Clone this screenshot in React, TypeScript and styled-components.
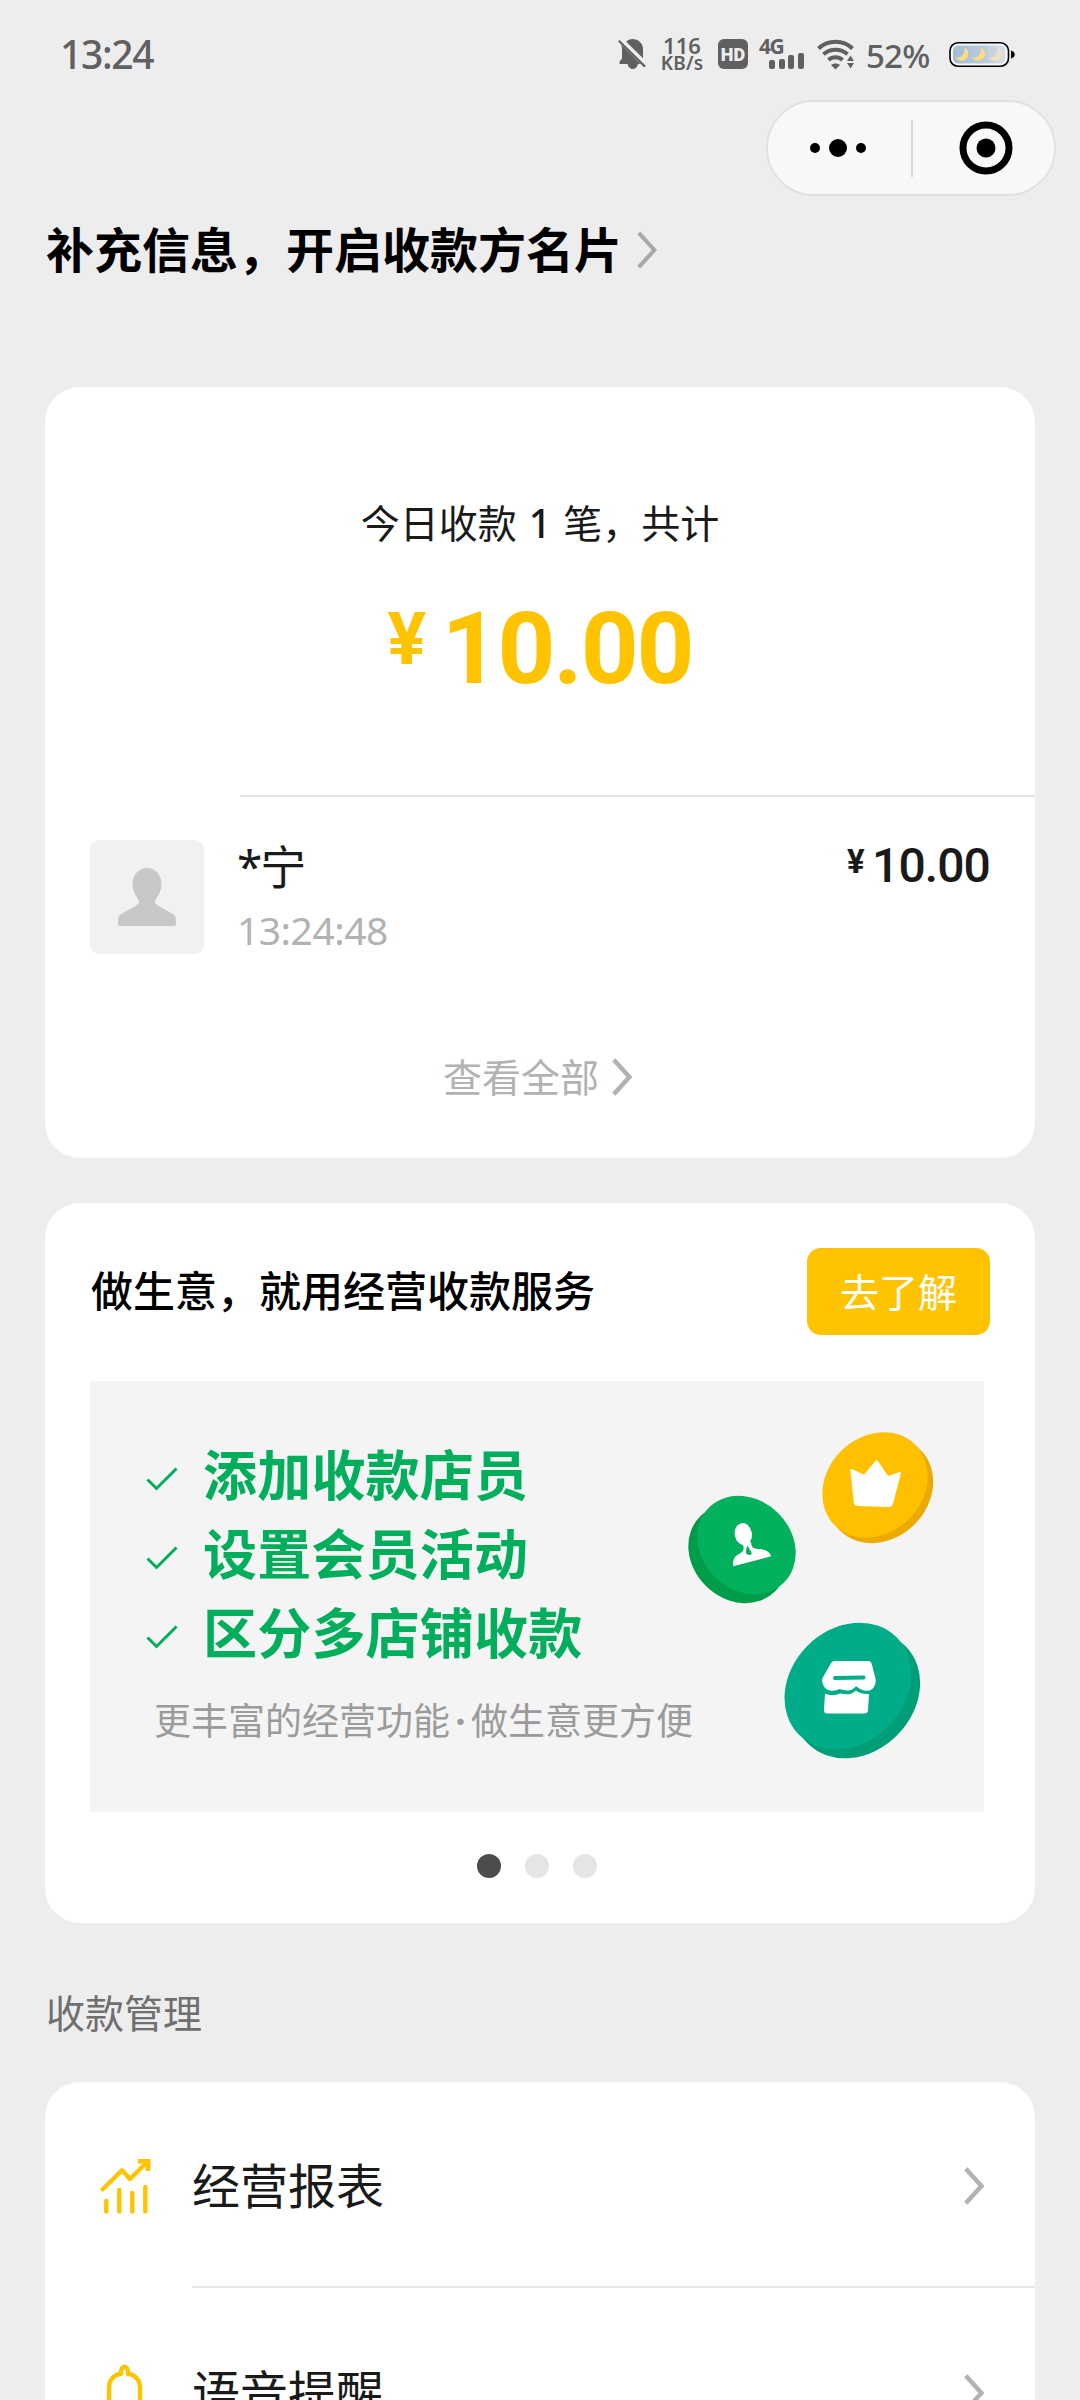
import React from "react";
import styled, { createGlobalStyle } from "styled-components";

const GlobalStyle = createGlobalStyle`
  * { box-sizing: border-box; }
  html, body { margin: 0; padding: 0; background: #ededed; }
  body {
    width: 1080px;
    height: 2400px;
    overflow: hidden;
    font-family: "Noto Sans", "Noto Sans CJK SC", sans-serif;
    color: #1a1a1a;
    white-space: nowrap;
  }
  svg { display: block; flex: none; }
`;

const Screen = styled.div`
  width: 1080px;
  height: 2400px;
  overflow: hidden;
  background: #ededed;
  display: flex;
  flex-direction: column;

  > * { flex: none; }
`;

/* ---------- status bar ---------- */

const StatusBar = styled.header`
  height: 100px;
  padding: 0 64px 0 60px;
  display: flex;
  align-items: flex-start;
  justify-content: space-between;
  color: #606060;
`;

const Clock = styled.div`
  margin-top: 29px;
  font-size: 39px;
  line-height: 50px;
  font-weight: 500;
  letter-spacing: -1.3px;
`;

const StatusIcons = styled.div`
  display: flex;
  align-items: flex-start;
  padding-top: 36px;
`;

const NetSpeed = styled.div`
  width: 44px;
  margin-left: 14px;
  display: flex;
  flex-direction: column;
  align-items: center;
  font-weight: 600;
`;

const SpeedValue = styled.span`
  font-size: 22px;
  line-height: 18px;
`;

const SpeedUnit = styled.span`
  font-size: 19px;
  line-height: 18px;
  letter-spacing: 0.2px;
`;

const HdBadge = styled.div`
  width: 30px;
  height: 30px;
  margin: 3px 0 0 14px;
  border-radius: 6px;
  background: #606060;
  color: #ededed;
  font-family: Roboto, sans-serif;
  font-size: 18px;
  line-height: 31px;
  font-weight: 900;
  text-align: center;
`;

const Cellular = styled.div`
  width: 46px;
  height: 34px;
  margin-left: 11px;
  display: grid;
  grid-template: 34px / 46px;
`;

const CellType = styled.span`
  grid-area: 1 / 1;
  font-size: 21px;
  line-height: 21px;
  font-weight: 700;
  letter-spacing: -1.4px;
`;

const CellBars = styled.div`
  grid-area: 1 / 1;
  display: flex;
  align-items: flex-end;
  justify-content: flex-end;
  gap: 3.6px;
  padding: 0 1px 1px 0;
`;

const CellBar = styled.i<{ $h: number }>`
  width: 6px;
  height: ${(p) => p.$h}px;
  border-radius: 2px;
  background: #606060;
`;

const Percent = styled.div`
  margin: 1px 0 0 12px;
  width: 68px;
  font-size: 33px;
  line-height: 38px;
  font-weight: 500;
  letter-spacing: -0.8px;
`;

/* ---------- capsule ---------- */

const CapsuleRow = styled.div`
  height: 96px;
  padding-right: 24px;
  display: flex;
  justify-content: flex-end;
`;

const Capsule = styled.div`
  width: 290px;
  height: 96px;
  border: 2px solid #e1e1e1;
  border-radius: 48px;
  background: #f8f8f8;
  display: flex;
  align-items: center;
`;

const CapsuleHalf = styled.button<{ $pad: string; $w: number }>`
  flex: none;
  width: ${(p) => p.$w}px;
  border: 0;
  padding: ${(p) => p.$pad};
  background: none;
  display: flex;
  align-items: center;
  justify-content: center;
  gap: 9px;
`;

const Dot = styled.i<{ $d: number }>`
  width: ${(p) => p.$d}px;
  height: ${(p) => p.$d}px;
  border-radius: 50%;
  background: #000;
`;

const CapsuleRule = styled.i`
  width: 2px;
  height: 57px;
  background: #d7d7d7;
`;

/* ---------- heading ---------- */

const Heading = styled.h1`
  margin: 0;
  height: 191px;
  padding: 24px 0 0 46px;
  display: flex;
  align-items: flex-start;
  gap: 15px;
  font-size: 48px;
  line-height: 60px;
  font-weight: 700;
  color: #000;

  svg { margin-top: 11px; }
`;

/* ---------- cards ---------- */

const Card = styled.section<{ $h: number; $top?: number }>`
  width: 990px;
  height: ${(p) => p.$h}px;
  margin: ${(p) => p.$top ?? 0}px 45px 0;
  border-radius: 35px;
  background: #fff;
  overflow: hidden;
  display: flex;
  flex-direction: column;

  > * { flex: none; }
`;

const Summary = styled.div`
  height: 408px;
  padding-top: 111px;
  display: flex;
  flex-direction: column;
  align-items: center;
`;

const SummaryText = styled.div`
  font-size: 39px;
  line-height: 50px;

  b { font-weight: 500; margin: 0 2px; }
`;

const Total = styled.div`
  margin-top: 51px;
  display: flex;
  align-items: flex-start;
  font-family: Roboto, sans-serif;
  font-weight: 700;
  color: #ffc300;
`;

const TotalSign = styled.span`
  font-size: 72px;
  line-height: 82px;
  width: 54px;
  letter-spacing: -2px;
`;

const TotalValue = styled.span`
  font-size: 101px;
  line-height: 100px;
  letter-spacing: -2px;
`;

const Divider = styled.hr<{ $inset: number }>`
  width: auto;
  height: 2px;
  margin: 0 0 0 ${(p) => p.$inset}px;
  border: 0;
  background: #e6e6e6;
`;

const Payment = styled.div`
  height: 200px;
  padding: 43px 45px 0 45px;
  display: flex;
  align-items: flex-start;
`;

const Avatar = styled.div`
  width: 114px;
  height: 114px;
  border-radius: 9px;
  background: #f1f1f1;
  display: flex;
  align-items: center;
  justify-content: center;
`;

const Payer = styled.div`
  flex: 1;
  margin-left: 33px;
  display: flex;
  flex-direction: column;
`;

const PayerName = styled.span`
  font-size: 46px;
  line-height: 52px;
  letter-spacing: -2px;
`;

const PayTime = styled.span`
  margin-top: 13px;
  font-size: 39px;
  line-height: 50px;
  letter-spacing: -0.5px;
  color: #b2b2b2;
`;

const Amount = styled.div`
  display: flex;
  align-items: flex-start;
  padding-top: 1px;
  font-family: Roboto, sans-serif;
  font-weight: 500;
`;

const AmountSign = styled.span`
  width: 25px;
  font-size: 33px;
  line-height: 41px;
  font-weight: 700;
`;

const AmountValue = styled.span`
  font-size: 48px;
  line-height: 50px;
  letter-spacing: -0.9px;
`;

const ViewAll = styled.a`
  display: flex;
  align-items: center;
  justify-content: center;
  gap: 13px;
  margin-top: 55px;
  padding-right: 5px;
  font-size: 39px;
  line-height: 50px;
  color: #b2b2b2;
`;

/* ---------- promo ---------- */

const PromoHead = styled.div`
  height: 178px;
  padding: 45px 45px 0 46px;
  display: flex;
  align-items: flex-start;
  justify-content: space-between;
`;

const PromoTitle = styled.h2`
  margin: 0;
  font-size: 42px;
  line-height: 86px;
  font-weight: 500;
  color: #000;
`;

const LearnButton = styled.button`
  width: 183px;
  height: 87px;
  padding: 0;
  border: 0;
  border-radius: 14px;
  background: #ffc300;
  color: #fff;
  font: inherit;
  font-size: 39px;
  line-height: 85px;
`;

const Banner = styled.div`
  width: 894px;
  height: 431px;
  margin-left: 45px;
  background: #f4f4f4;
  display: flex;
`;

const BannerCopy = styled.div`
  flex: none;
  width: 590px;
  padding: 55px 0 0 56px;
`;

const Feature = styled.div`
  height: 79px;
  display: flex;
  align-items: center;
  gap: 25px;
  font-size: 54px;
  line-height: 79px;
  font-weight: 700;
  letter-spacing: 0.2px;
  color: #00ae5c;

  svg { margin-top: 7px; }
`;

const BannerNote = styled.div`
  margin: 23px 0 0 8px;
  font-size: 37px;
  line-height: 50px;
  color: #9b9b9b;

  i { display: inline-block; width: 21px; text-align: center; font-style: normal; font-weight: 700; }
`;

const Pager = styled.div`
  margin-top: 42px;
  padding-right: 6px;
  display: flex;
  justify-content: center;
  gap: 24px;
`;

const PagerDot = styled.i<{ $active?: boolean }>`
  width: 24px;
  height: 24px;
  border-radius: 50%;
  background: ${(p) => (p.$active ? "#4c4c4c" : "#e5e5e5")};
`;

/* ---------- management ---------- */

const SectionTitle = styled.h3`
  margin: 0;
  height: 159px;
  padding: 65px 0 0 46px;
  font-size: 39px;
  line-height: 50px;
  font-weight: 400;
  color: #6f6f6f;
`;

const MenuRow = styled.div`
  height: 204px;
  padding: 3px 51px 0 52px;
  display: flex;
  align-items: center;
`;

const MenuLabel = styled.span`
  flex: 1;
  margin-left: 37px;
  font-size: 48px;
  line-height: 60px;
`;

const RowGap = styled.div`
  height: 1px;
`;

const Chevron = ({ color = "#b2b2b2", weight = 4.5 }: { color?: string; weight?: number }) => (
  <svg width="20" height="38" viewBox="0 0 20 38" fill="none">
    <path d="M1.8 1.8 17.4 19 1.8 36.2" stroke={color} strokeWidth={weight} />
  </svg>
);

const MuteBell = () => (
  <svg width="28" height="34" viewBox="0 0 28 34">
    <path
      fill="#606060"
      d="M3 8.500 22.500 28H1.500v-2.200L4 22.500V13c0-1.600-.3-3-1-4.500ZM8.200 5.800C10 3.900 12.300 3 14.500 3 20 3 25 7 25 13v9.200L8.200 5.800ZM9.500 28h10.500c-.8 3.500-2.800 5-5.200 5s-4.500-1.500-5.300-5Z"
    />
    <path d="M.8 4.800 27 30.600" stroke="#606060" strokeWidth="2.200" />
  </svg>
);

const WifiSvg = styled.svg`
  margin-left: 12px;
`;

const Wifi = () => (
  <WifiSvg width="37" height="34" viewBox="0 0 37 34" fill="none">
    <path d="M1.500 12.500C11 3.500 26 3.500 35.500 12.500" stroke="#606060" strokeWidth="4" />
    <path d="M6.500 18.300c6.500-6.200 17.500-6.200 24 0" stroke="#606060" strokeWidth="4" />
    <path d="M11.500 24c4-3.600 10-3.600 14 0" stroke="#606060" strokeWidth="4" />
    <path d="M14 29c2.500-2 6.500-2 9 0l-4.500 4.500Z" fill="#606060" />
    <path d="m33.500 19.500 3.500 5.500h-7ZM33.500 32.500l3.500-5.500h-7Z" fill="#606060" />
  </WifiSvg>
);

const BatterySvg = styled.svg`
  margin-left: 15px;
`;

const Battery = () => (
  <BatterySvg width="67" height="32" viewBox="0 0 67 32">
    <defs>
      <linearGradient id="charge" x1="0" x2="1">
        <stop offset="0" stopColor="#a3bcd6" />
        <stop offset="0.6" stopColor="#bccbdc" />
        <stop offset="1" stopColor="#dcdfe4" />
      </linearGradient>
    </defs>
    <rect x="1" y="6.800" width="58.500" height="23.400" rx="8" fill="#f4f7fa" stroke="#000" strokeWidth="1.600" />
    <rect x="4" y="9.500" width="52.500" height="18" rx="5.500" fill="url(#charge)" />
    <path fill="#fbdc85" d="M15.500 11.500a7 7 0 1 1-9 10c5.500 1 10-3.500 9-10Z" />
    <path fill="#fbdc85" d="M32 11.500a7 7 0 1 1-9 10c5.500 1 10-3.500 9-10Z" />
    <path fill="#f1e2bf" d="M48.500 11.500a7 7 0 1 1-9 10c5.500 1 10-3.500 9-10Z" />
    <path d="M62 14.500c5 1.200 5 6.800 0 8Z" fill="#000" />
  </BatterySvg>
);

const Target = () => (
  <svg width="54" height="54" viewBox="0 0 54 54">
    <circle cx="27" cy="27" r="23" fill="none" stroke="#000" strokeWidth="7" />
    <circle cx="27" cy="27" r="9.500" />
  </svg>
);

const Person = () => (
  <svg width="58" height="58" viewBox="0 0 58 58">
    <path
      fill="#c8c8c8"
      d="M29 0c8.500 0 14.500 7 14.500 16 0 6-2.500 11-5.500 15-1.500 2.200-1.500 4 .5 5.500 4 3 11 6 16 9.500 2.500 1.700 3.500 3.300 3.500 6v3.500c0 1.700-.8 2.500-2.500 2.500h-53C.8 58 0 57.200 0 55.500V52c0-2.700 1-4.300 3.500-6 5-3.500 12-6.500 16-9.500 2-1.500 2-3.300.5-5.500-3-4-5.500-9-5.500-15C14.500 7 20.500 0 29 0Z"
    />
  </svg>
);

const Check = () => (
  <svg width="32" height="25" viewBox="0 0 32 25" fill="none">
    <path d="M1.500 12.500 10.500 21.500 30.500 1.500" stroke="#00ae5c" strokeWidth="3" />
  </svg>
);

interface CoinProps {
  cx: number;
  cy: number;
  a: number;
  b: number;
  angle: number;
  dx: number;
  dy: number;
  face: string;
  edge: string;
}

const Coin = ({ cx, cy, a, b, angle, dx, dy, face, edge }: CoinProps) => (
  <>
    <ellipse rx={a} ry={b} fill={edge} transform={`translate(${cx + dx} ${cy + dy}) rotate(${angle})`} />
    <ellipse rx={a} ry={b} fill={face} transform={`translate(${cx} ${cy}) rotate(${angle})`} />
  </>
);

const Coins = () => (
  <svg width="260" height="431" viewBox="0 0 260 431">
    <Coin cx={195} cy={104} a={57} b={48} angle={-45} dx={5.5} dy={5.5} face="#ffc000" edge="#eaaa00" />
    <path
      fill="#fff"
      stroke="#fff"
      strokeWidth="2"
      strokeLinejoin="round"
      d="m171.300 89 13 6 12.400-15 11 16.300 12.300-4.300-7.800 30c-.5 2-1.500 3-3.500 3l-31-1c-2 0-2.800-1-3-3Z"
    />
    <Coin cx={66.5} cy={164} a={53} b={45} angle={45} dx={-9} dy={9} face="#03b05d" edge="#009c4a" />
    <ellipse rx="8.600" ry="11" fill="#fff" transform="translate(63.300 153) rotate(-10)" />
    <path
      fill="#fff"
      d="m60 160 11 1c.3 3 .8 5 2.500 6 4.500 1.500 9 .8 12.500 2.500 3 1.500 4.500 3.500 5 5.800L53.200 185.300c-.5-4 .3-8 2.800-10.300 2.500-2.300 6.300-3 7.300-6 .7-2.500.2-4-1.300-7Z"
    />
    <path fill="#03b05d" d="m67.500 165.500 3.700 6.500-.5 1.500-3.700-.5-.7-2.500Z" stroke="#03b05d" />
    <Coin cx={167.8} cy={305} a={69} b={57} angle={-45} dx={9} dy={9} face="#00ad88" edge="#009e78" />
    <path
      fill="#fff"
      d="M155 280h33c2 0 3 .8 3.700 2.700l4 15.500c.5 6-3 11.500-8.200 11.500-5 0-8-2-11.500-4.500-3 3-5 4.300-8 4.300-3 0-6-1-8.500-1.500-3 1.500-6 2-9.200 1.500-5.300-.7-8.800-6-8-12l8.500-15c1-1.700 2.200-2.500 4.200-2.500Z"
    />
    <path d="M155 297l28.500-.5" stroke="#00ad88" strokeWidth="4" strokeLinecap="round" />
    <path
      fill="#fff"
      d="M145 312.500c5 2.500 10 2 15 0 5 1 11 1.500 14-1.500l2-1.500c3 2.500 7 4 13 3.500l-1 16.500c-.2 2-1.500 3-3.500 3h-37c-2.500 0-3.700-1-3.500-3.500Z"
    />
  </svg>
);

const ChartIcon = () => (
  <svg width="58" height="58" viewBox="0 0 58 58" fill="none" stroke="#ffc300" strokeWidth="4.400" strokeLinecap="round">
    <path d="M5.700 32.300 25 13.300l8 8.700L50 5" strokeLinejoin="round" />
    <path d="M41 4.300h10v9.700" strokeLinecap="butt" strokeWidth="4.600" />
    <path d="M46 5h5v5" />
    <path d="M9.300 44v10.500M22.300 33v21.500M35.300 36v18.500M48.300 30v24.500" />
  </svg>
);

const BellIcon = () => (
  <svg width="58" height="58" viewBox="0 0 58 58" fill="none" stroke="#ffc300" strokeWidth="4.400" strokeLinecap="round" strokeLinejoin="round">
    <path d="M24 9.500C15.500 11.500 12 17.500 12 23v16l-5 8h41l-5-8V23c0-5.500-3.500-11.500-12-13.500" />
    <path d="M24 9.500C23.500 0.500 31.500 0.500 31 9.500" />
    <path d="M21 52c2 5 11 5 13 0" />
  </svg>
);

const features = ["添加收款店员", "设置会员活动", "区分多店铺收款"];

export default function App() {
  return (
    <>
      <GlobalStyle />
      <Screen>
        <StatusBar>
          <Clock>13:24</Clock>
          <StatusIcons>
            <MuteBell />
            <NetSpeed>
              <SpeedValue>116</SpeedValue>
              <SpeedUnit>KB/s</SpeedUnit>
            </NetSpeed>
            <HdBadge>HD</HdBadge>
            <Cellular>
              <CellType>4G</CellType>
              <CellBars>
                {[9, 10, 14, 16].map((h) => (
                  <CellBar key={h} $h={h} />
                ))}
              </CellBars>
            </Cellular>
            <Wifi />
            <Percent>52%</Percent>
            <Battery />
          </StatusIcons>
        </StatusBar>

        <CapsuleRow>
          <Capsule>
            <CapsuleHalf $w={143} $pad="0 3px 0 0">
              <Dot $d={10} />
              <Dot $d={18} />
              <Dot $d={10} />
            </CapsuleHalf>
            <CapsuleRule />
            <CapsuleHalf $w={141} $pad="0 0 0 4px">
              <Target />
            </CapsuleHalf>
          </Capsule>
        </CapsuleRow>

        <Heading>
          补充信息，开启收款方名片
          <Chevron color="#a8a8a8" weight={4} />
        </Heading>

        <Card $h={771}>
          <Summary>
            <SummaryText>
              今日收款 <b>1</b> 笔，共计
            </SummaryText>
            <Total>
              <TotalSign>¥</TotalSign>
              <TotalValue>10.00</TotalValue>
            </Total>
          </Summary>
          <Divider $inset={195} />
          <Payment>
            <Avatar>
              <Person />
            </Avatar>
            <Payer>
              <PayerName>*宁</PayerName>
              <PayTime>13:24:48</PayTime>
            </Payer>
            <Amount>
              <AmountSign>¥</AmountSign>
              <AmountValue>10.00</AmountValue>
            </Amount>
          </Payment>
          <ViewAll>
            查看全部
            <Chevron />
          </ViewAll>
        </Card>

        <Card $h={720} $top={45}>
          <PromoHead>
            <PromoTitle>做生意，就用经营收款服务</PromoTitle>
            <LearnButton>去了解</LearnButton>
          </PromoHead>
          <Banner>
            <BannerCopy>
              {features.map((f) => (
                <Feature key={f}>
                  <Check />
                  {f}
                </Feature>
              ))}
              <BannerNote>
                更丰富的经营功能<i>·</i>做生意更方便
              </BannerNote>
            </BannerCopy>
            <Coins />
          </Banner>
          <Pager>
            <PagerDot $active />
            <PagerDot />
            <PagerDot />
          </Pager>
        </Card>

        <SectionTitle>收款管理</SectionTitle>

        <Card $h={420}>
          <MenuRow>
            <ChartIcon />
            <MenuLabel>经营报表</MenuLabel>
            <Chevron />
          </MenuRow>
          <Divider $inset={147} />
          <RowGap />
          <MenuRow>
            <BellIcon />
            <MenuLabel>语音提醒</MenuLabel>
            <Chevron />
          </MenuRow>
        </Card>
      </Screen>
    </>
  );
}
